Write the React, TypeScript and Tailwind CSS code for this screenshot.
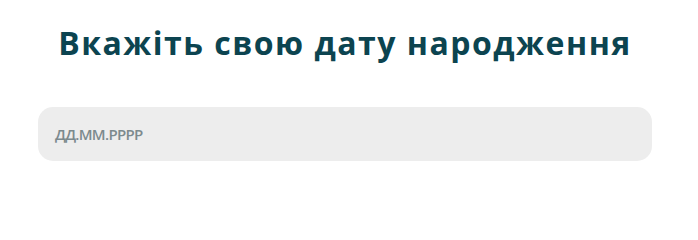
export default function App() {
  return (
    <div className="w-[698px] h-[225px] bg-white" style={{ fontFamily: '"Open Sans", "Noto Sans", sans-serif' }}>
      <div className="ml-[38px] w-[614px] pt-[21px] flex flex-col items-center">
        <h1 className="text-[32px] leading-[44px] font-bold text-[#0c4450] tracking-[1.5px] whitespace-nowrap">Вкажіть свою дату народження</h1>
        <div className="mt-[42px] w-full h-[54px] rounded-[15px] bg-[#ededed] flex items-center px-[17px]">
          <span className="text-[15px] font-semibold text-[#7c8a8e] tracking-[-0.7px]">ДД.ММ.РРРР</span>
        </div>
      </div>
    </div>
  );
}
